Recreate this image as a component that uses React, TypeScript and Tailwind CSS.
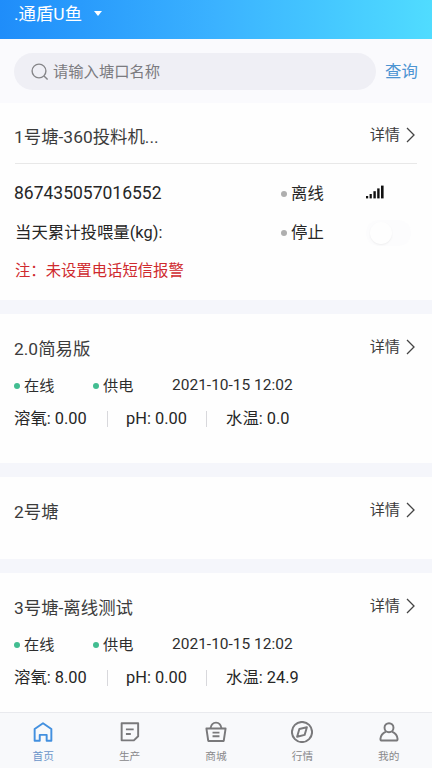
import React from 'react';

type Readings = {
  time: string;
  oxygen: string;
  ph: string;
  temp: string;
};

const HomeIcon = () => (
  <path d="M2.6 7.8 10.8 2.2 19 7.8V19.4H14.4V13.6H7.6V19.4H2.6Z" />
);

const ProduceIcon = () => (
  <>
    <path d="M2.6 2.2H18.8V15L14.6 19H2.6Z" />
    <path d="M6.8 8.2H14.4M6.8 12.8H11.6" />
  </>
);

const MallIcon = () => (
  <>
    <path d="M1.4 7.4H20.2L18.4 19.6H3.2Z" />
    <path d="M5.4 7.2C6 3.6 8 1.6 10.8 1.6S15.6 3.6 16.2 7.2M7.4 11.4H14.2M7.4 15H14.2" />
  </>
);

const MarketIcon = () => (
  <>
    <circle cx="10.8" cy="10.8" r="9.9" />
    <path d="M8.2 7.8 15.6 6.2 13.4 13.6 6 15.4Z" />
  </>
);

const MineIcon = () => (
  <>
    <circle cx="10.8" cy="6.6" r="4.4" />
    <path d="M7.8 10.4C4.6 11.8 2.6 14 2.4 17.6Q2.4 19.2 4 19.2H17.6Q19.2 19.2 19.2 17.6C19 14 17 11.8 13.8 10.4" />
  </>
);

const tabs = [
  { label: '首页', icon: HomeIcon, active: true },
  { label: '生产', icon: ProduceIcon },
  { label: '商城', icon: MallIcon },
  { label: '行情', icon: MarketIcon },
  { label: '我的', icon: MineIcon },
];

const Dot: React.FC<{ online?: boolean }> = ({ online }) => (
  <span className={`h-1.5 w-1.5 shrink-0 rounded-full ${online ? 'bg-[#42bd91]' : 'bg-[#afafaf]'}`} />
);

const PondTitle: React.FC<{ name: string }> = ({ name }) => (
  <div className="flex h-[52px] items-center justify-between">
    <h2 className="-ml-px pt-[3px] text-[17.4px] text-[#3c3c3c]">{name}</h2>
    <button className="mr-[2px] flex items-center pb-[2px] text-[15.2px] text-[#3c3c3c]">
      详情
      <svg className="ml-[6px] h-4 w-[9px]" viewBox="0 0 9 16" fill="none" stroke="#444" strokeWidth="1.3">
        <path d="M1 1 8 8 1 15" />
      </svg>
    </button>
  </div>
);

const PondReadings: React.FC<{ data: Readings }> = ({ data }) => (
  <>
    <div className="flex h-[23px] items-center text-[15.2px] text-[#2e2e2e]">
      <div className="-ml-px flex w-[79px] items-center gap-1">
        <Dot online />
        <span className="pt-[2px]">在线</span>
      </div>
      <div className="flex w-[79px] items-center gap-1">
        <Dot online />
        <span className="pt-[2px]">供电</span>
      </div>
      <span className="text-[15.5px]">{data.time}</span>
    </div>
    <div className="flex h-[42px] items-center pt-[2px] text-[16.4px] text-[#262626]">
      <span className="-ml-px w-[93px]">溶氧: {data.oxygen}</span>
      <i className="h-4 w-px bg-[#d8d8dc]" />
      <span className="ml-[18px] w-[80px]">pH: {data.ph}</span>
      <i className="h-4 w-px bg-[#d8d8dc]" />
      <span className="ml-[19px]">水温: {data.temp}</span>
    </div>
  </>
);

export default function App() {
  return (
    <div className="flex h-[768px] w-[432px] flex-col overflow-hidden bg-[#f5f6fb] font-['Roboto','Noto_Sans_CJK_SC',sans-serif]">
      <header className="flex h-[39px] shrink-0 items-start bg-linear-to-r from-[#1f8dfa] via-[#3bb2ff] to-[#50dcff] pl-[14px] text-[17.4px] leading-[29px] text-white">
        <span>.通盾U鱼</span>
        <i className="mt-[11px] ml-3 h-0 w-0 border-x-4 border-t-[5px] border-x-transparent border-t-white" />
      </header>

      <div className="flex h-[64px] shrink-0 items-center bg-[#fafafd] pt-px pl-[14px]">
        <div className="flex h-[37px] w-[362px] items-center rounded-full bg-[#efeff5] pl-[17px] text-[15.3px] text-[#7b7b80]">
          <svg className="mr-1 h-[18px] w-[18px]" viewBox="0 0 18 18" fill="none" stroke="#858588" strokeWidth="1.4">
            <circle cx="8" cy="8" r="6.9" />
            <path d="M13 13 16.6 16.6" />
          </svg>
          <span className="pt-[2px]">请输入塘口名称</span>
        </div>
        <button className="ml-[9px] pt-[2px] text-[16.4px] text-[#4d94d2]">查询</button>
      </div>

      <main className="flex flex-1 flex-col gap-[14px]">
        {/* 投料机 */}
        <section className="h-[197px] bg-[#fefefe] px-[15px] pt-[7px]">
          <PondTitle name="1号塘-360投料机..." />
          <div className="mt-px border-t border-[#e8e8e8] pt-[10px]">
            <div className="flex h-[39px] items-center text-[16.4px] text-[#262626]">
              <span className="-ml-px w-[267px] text-[17.5px]">867435057016552</span>
              <Dot />
              <span className="ml-1 w-[75px] pt-[2px]">离线</span>
              <svg className="mb-1 h-[14px] w-[18px]" viewBox="0 0 18 14" fill="#111">
                <rect x="0" y="11" width="2.2" height="2.4" />
                <rect x="3.6" y="9" width="2.2" height="4.4" />
                <rect x="7.4" y="6.2" width="2.4" height="7.2" />
                <rect x="11.2" y="3.4" width="2.4" height="10" />
                <rect x="15" y="0.6" width="2.6" height="12.8" />
              </svg>
            </div>
            <div className="flex h-[39px] items-center text-[16.4px] text-[#262626]">
              <span className="w-[266px] pt-[2px]">当天累计投喂量(kg):</span>
              <Dot />
              <span className="ml-1 w-[75px] pt-[2px]">停止</span>
              <span className="flex h-[26px] w-[45px] items-center rounded-full bg-[#fcfcfd]">
                <i className="ml-1 h-[22px] w-[22px] rounded-full bg-[#fefefe] shadow-[0_1px_2px_rgba(0,0,0,0.06)]" />
              </span>
            </div>
            <p className="h-[36px] text-[15.35px] leading-[38px] text-[#cf2a2e]">注：未设置电话短信报警</p>
          </div>
        </section>

        <section className="h-[149px] bg-[#fefefe] px-[15px] pt-[8px]">
          <PondTitle name="2.0简易版" />
          <PondReadings data={{ time: '2021-10-15 12:02', oxygen: '0.00', ph: '0.00', temp: '0.0' }} />
        </section>

        <section className="h-[82px] bg-[#fefefe] px-[15px] pt-[8px]">
          <PondTitle name="2号塘" />
        </section>

        <section className="h-[139px] bg-[#fefefe] px-[15px] pt-[8px]">
          <PondTitle name="3号塘-离线测试" />
          <PondReadings data={{ time: '2021-10-15 12:02', oxygen: '8.00', ph: '0.00', temp: '24.9' }} />
        </section>
      </main>

      <nav className="grid h-[56px] shrink-0 grid-cols-5 border-t border-[#e9eaee] bg-[#f8f9fb]">
        {tabs.map(({ label, icon: Icon, active }) => (
          <button
            key={label}
            className={`flex flex-col items-center pt-[8px] text-[10.7px] leading-[16px] ${active ? 'text-[#6a95c9]' : 'text-[#88888a]'}`}
          >
            <svg
              className="mb-[6px] h-[22px] w-[22px] shrink-0"
              viewBox="0 0 21.6 21.6"
              fill="none"
              stroke={active ? '#4390df' : '#79797b'}
              strokeWidth="1.9"
              strokeLinejoin="round"
            >
              <Icon />
            </svg>
            {label}
          </button>
        ))}
      </nav>
    </div>
  );
}
